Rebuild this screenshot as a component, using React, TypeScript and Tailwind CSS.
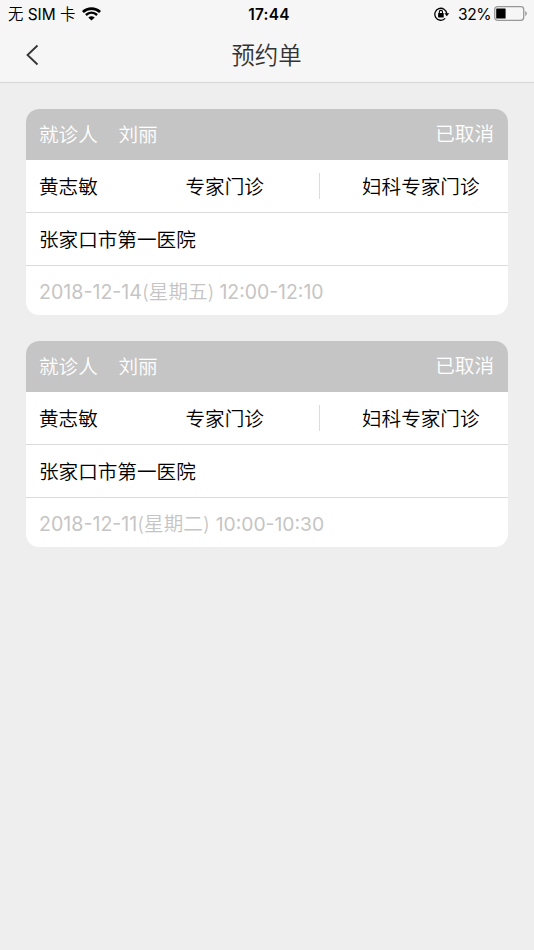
type Appointment = { date: string; weekday: string; range: string; rangeClass: string };

const appointments: Appointment[] = [
  { date: '2018-12-14', weekday: '(星期五)', range: '12:00-12:10', rangeClass: 'ml-[5px] text-[19.4px] font-normal' },
  { date: '2018-12-11', weekday: '(星期二)', range: '10:00-10:30', rangeClass: 'ml-[6px] text-[19.3px] font-normal' },
];

function WifiIcon() {
  return (
    <svg width="19" height="14" viewBox="0 0 19 14" fill="none">
      <path d="M.9 4.9C5.9 .4 13.1 .4 18.1 4.9" stroke="#000" strokeWidth="2.7" />
      <path d="M3.9 8C7.2 5 11.8 5 15.1 8" stroke="#000" strokeWidth="2.4" />
      <path d="M6.3 10.5Q9.5 7.9 12.7 10.5L9.5 13.6Z" fill="#000" />
    </svg>
  );
}

function RotationLockIcon() {
  return (
    <svg width="16" height="14" viewBox="0 0 16 14" fill="none">
      <path d="M11.2 11.4A6 6 0 1 1 12.8 6.6" stroke="#000" strokeWidth="1.3" />
      <path d="M10.4 6.2H15.2L12.8 9.2Z" fill="#000" />
      <rect x="4.1" y="6.1" width="5.6" height="4.4" rx=".4" fill="#000" />
      <path d="M5.3 6.5V5A1.6 1.6 0 0 1 8.5 5V6.5" stroke="#000" strokeWidth="1.1" />
    </svg>
  );
}

function BatteryIcon() {
  return (
    <svg className="mb-0.5" width="33" height="15" viewBox="0 0 33 15" fill="none">
      <rect x=".7" y=".7" width="29" height="13.6" rx="2.8" stroke="#999" strokeWidth="1.3" />
      <rect x="2.2" y="2.5" width="9.4" height="10" rx=".5" fill="#000" />
      <path d="M31.2 5Q32.8 5.6 32.8 7.5T31.2 10Z" fill="#999" />
    </svg>
  );
}

function Card({ date, weekday, range, rangeClass }: Appointment) {
  return (
    <section className="flex h-[206px] flex-col overflow-hidden rounded-[13px] bg-white text-[19.6px] text-black">
      <header className="flex h-[51px] items-center bg-[#c5c5c5] px-[13px] pt-0.5 text-white">
        <span className="w-[79.5px]">就诊人</span>
        <span>刘丽</span>
        <span className="-mt-0.5 ml-auto mr-px">已取消</span>
      </header>
      <div className="flex h-[52px] items-center px-[13px]">
        <span className="w-[146.5px] pt-[3px]">黄志敏</span>
        <span className="w-[133px] pt-[3px]">专家门诊</span>
        <span className="h-[26px] w-[1.5px] bg-[#dcdcdc]" />
        <span className="ml-[42px] pt-[3px]">妇科专家门诊</span>
      </div>
      <div className="flex h-[53px] items-center border-t border-[#dadada] px-[13px] pt-[3px]">张家口市第一医院</div>
      <div className="flex h-[50px] items-baseline border-t border-[#dadada] px-[13px] pt-3 text-[#c5c5c5]">
        <span className="font-normal">{date}</span>
        <span>{weekday}</span>
        <span className={rangeClass}>{range}</span>
      </div>
    </section>
  );
}

export default function App() {
  return (
    <main className="h-[950px] w-[534px] overflow-hidden bg-[#eeeeee] font-['Inter','Noto_Sans_CJK_SC',sans-serif] font-[350]">
      <div className="h-[83px] border-b border-[#d5d5d5] bg-[#f6f6f6]">
        <div className="grid h-7 grid-cols-3 items-center pl-2 pr-[7px] text-[15.4px] text-black">
          <div className="flex items-center gap-[7px]">
            <span className="whitespace-nowrap pt-px">
              无 <span className="font-normal">SIM</span> 卡
            </span>
            <WifiIcon />
          </div>
          <span className="pl-[3px] pt-px text-center font-semibold tracking-[0.25px]">17:44</span>
          <div className="flex h-[27px] items-center justify-end">
            <RotationLockIcon />
            <span className="ml-[8px] mr-[3px] pt-px text-[15.6px] font-normal tracking-[-0.5px]">32%</span>
            <BatteryIcon />
          </div>
        </div>
        <div className="grid h-[54px] grid-cols-[60px_1fr_60px] items-center">
          <svg className="ml-[25px]" width="14" height="22" viewBox="0 0 14 22" fill="none">
            <path d="M12.5 1.5L2.5 11L12.5 20.5" stroke="#333" strokeWidth="1.8" />
          </svg>
          <h1 className="pr-px pt-0.5 text-center text-[23.4px] text-[#333]">预约单</h1>
        </div>
      </div>
      <div className="flex flex-col gap-[26px] px-[26px] pt-[26px]">
        {appointments.map((item) => (
          <Card key={item.date} {...item} />
        ))}
      </div>
    </main>
  );
}
